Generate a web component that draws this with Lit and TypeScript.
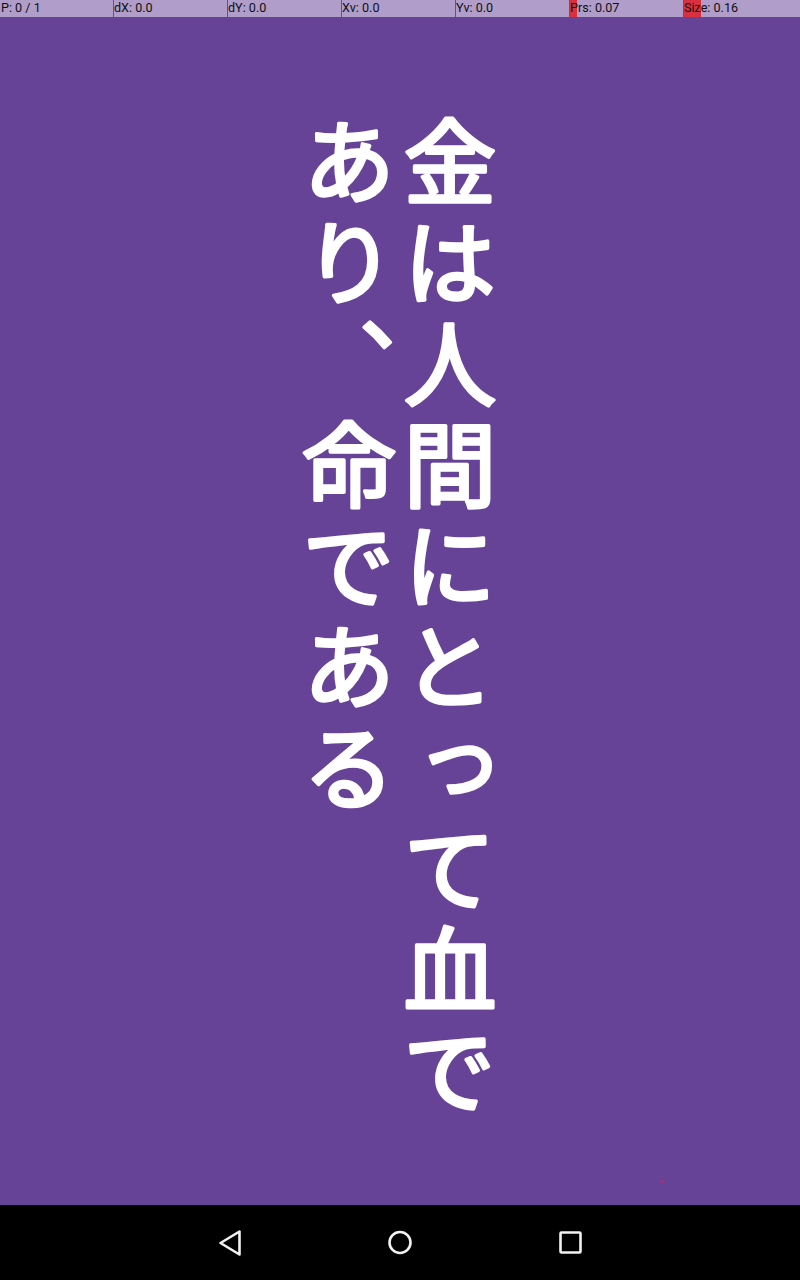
import { LitElement, html, css, svg } from "lit";
import { customElement } from "lit/decorators.js";

const CELLS = [
  { label: "P: 0 / 1", fill: 0 },
  { label: "dX: 0.0", fill: 0 },
  { label: "dY: 0.0", fill: 0 },
  { label: "Xv: 0.0", fill: 0 },
  { label: "Yv: 0.0", fill: 0 },
  { label: "Prs: 0.07", fill: 7 },
  { label: "Size: 0.16", fill: 17 },
];

const COLUMNS = ["金は人間にとって血で", "あり、命である"];
const PITCH = 101;

@customElement("app-root")
export class AppRoot extends LitElement {
  static styles = css`
    :host { display: flex; flex-direction: column; width: 800px; height: 1280px; overflow: hidden; background: #000; }
    .stats { display: grid; grid-template-columns: repeat(7, 114px); height: 17px; background: #b09dca; flex: none; margin-left: -1px; }
    .cell { position: relative; border-left: 1px solid #6a4a9c; font: 12.6px/16px Roboto, sans-serif; color: #111; white-space: nowrap; overflow: hidden; }
    .cell:first-child { border-left: 0; padding-left: 2px; }
    .bar { position: absolute; left: 0; top: 0; bottom: 0; background: #d9303f; }
    .label { position: relative; }
    .stage { flex: 1; position: relative; background: #674398; display: flex; justify-content: center; padding-top: 98px; }
    .poem { display: block; width: 200px; height: 1060px; overflow: visible; }
    .poem text {
      font: 400 93px "Noto Sans CJK JP", sans-serif;
      writing-mode: vertical-rl;
      letter-spacing: 8px;
      fill: #fff;
      stroke: #fff;
      stroke-width: 3.4px;
      stroke-linejoin: round;
      stroke-linecap: round;
    }
    .dot { position: absolute; left: 661px; top: 1163px; width: 3px; height: 3px; border-radius: 50%; background: #b02f66; }
    .nav { height: 75px; flex: none; background: #000; display: flex; justify-content: center; align-items: center; gap: 122px; }
    .nav svg { width: 48px; height: 48px; display: block; fill: none; stroke: #f2f2f2; stroke-width: 2.6; stroke-linejoin: round; }
  `;

  render() {
    return html`
      <div class="stats">
        ${CELLS.map(c => html`<div class="cell">
          ${c.fill ? html`<div class="bar" style="width:${c.fill}px"></div>` : ""}
          <span class="label">${c.label}</span>
        </div>`)}
      </div>
      <div class="stage">
        <svg class="poem" viewBox="0 0 200 1060">
          ${COLUMNS.map((t, i) => svg`<text x=${150 - i * PITCH} y="0">${t}</text>`)}
        </svg>
        <div class="dot"></div>
      </div>
      <div class="nav">
        <svg viewBox="0 0 48 48"><path d="M33.5 12.5V35.5L14.5 24z"/></svg>
        <svg viewBox="0 0 48 48"><circle cx="24" cy="23.5" r="10.5"/></svg>
        <svg viewBox="0 0 48 48"><rect x="14.5" y="13.5" width="20" height="20" rx="1"/></svg>
      </div>
    `;
  }
}
